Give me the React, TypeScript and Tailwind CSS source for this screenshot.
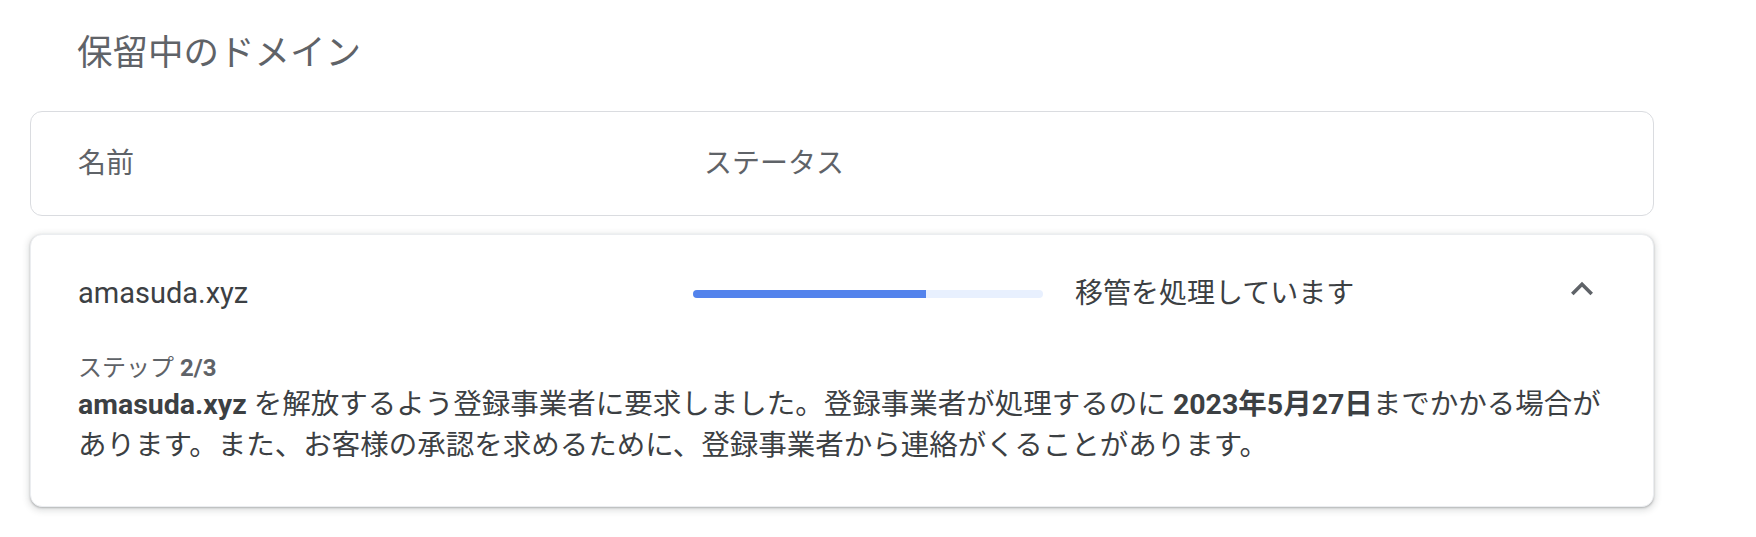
import { ReactNode } from 'react';

const font = { fontFamily: 'Roboto, "Noto Sans CJK JP", sans-serif' };

function ExpandLess() {
  return (
    <svg viewBox="0 0 24 24" className="w-[44px] h-[44px] fill-[#5f6368]">
      <path d="M7.41 15.41 12 10.83l4.59 4.58L18 14l-6-6-6 6z" />
    </svg>
  );
}

function ProgressBar({ value }: { value: number }) {
  return (
    <div className="w-[350px] h-[8px] rounded-full bg-[#e8f0fe] overflow-hidden">
      <div className="h-full bg-[#5383ec]" style={{ width: `${value * 100}%` }} />
    </div>
  );
}

function B({ children }: { children: ReactNode }) {
  return <span className="font-bold">{children}</span>;
}

export default function App() {
  return (
    <div className="min-h-[537px] bg-white pt-[32px] pl-[30px] pr-[102px]" style={font}>
      <h2 className="pl-[47px] text-[35.5px] leading-[43px] text-[#5f6368] font-normal mb-[36px]">
        保留中のドメイン
      </h2>

      <div className="h-[105px] rounded-[12px] border border-[#dadce0] flex items-center px-[47px] text-[28px] text-[#5f6368]">
        <div className="w-[626px]">名前</div>
        <div>ステータス</div>
      </div>

      <div className="mt-[18px] rounded-[12px] border border-[#ebedf0] bg-white shadow-[0_1px_2px_0_rgba(60,64,67,0.3),0_2px_6px_2px_rgba(60,64,67,0.15)] px-[47px] pb-[40px]">
        <div className="h-[117px] flex items-center">
          <div className="w-[615px] text-[29px] text-[#3c4043]">amasuda.xyz</div>
          <ProgressBar value={2 / 3} />
          <div className="ml-[32px] text-[28px] text-[#3c4043]">移管を処理しています</div>
          <button className="ml-auto mr-[2px] mt-[-10px]">
            <ExpandLess />
          </button>
        </div>
        <div className="text-[24px] leading-[32px] text-[#5f6368]">
          ステップ <B>2/3</B>
        </div>
        <p className="text-[28.5px] leading-[41px] text-[#3c4043]">
          <B>amasuda.xyz</B> を解放するよう登録事業者に要求しました。登録事業者が処理するのに <B>2023年5月27日</B>までかかる場合が
          <br />
          あります。また、お客様の承認を求めるために、登録事業者から連絡がくることがあります。
        </p>
      </div>
    </div>
  );
}
